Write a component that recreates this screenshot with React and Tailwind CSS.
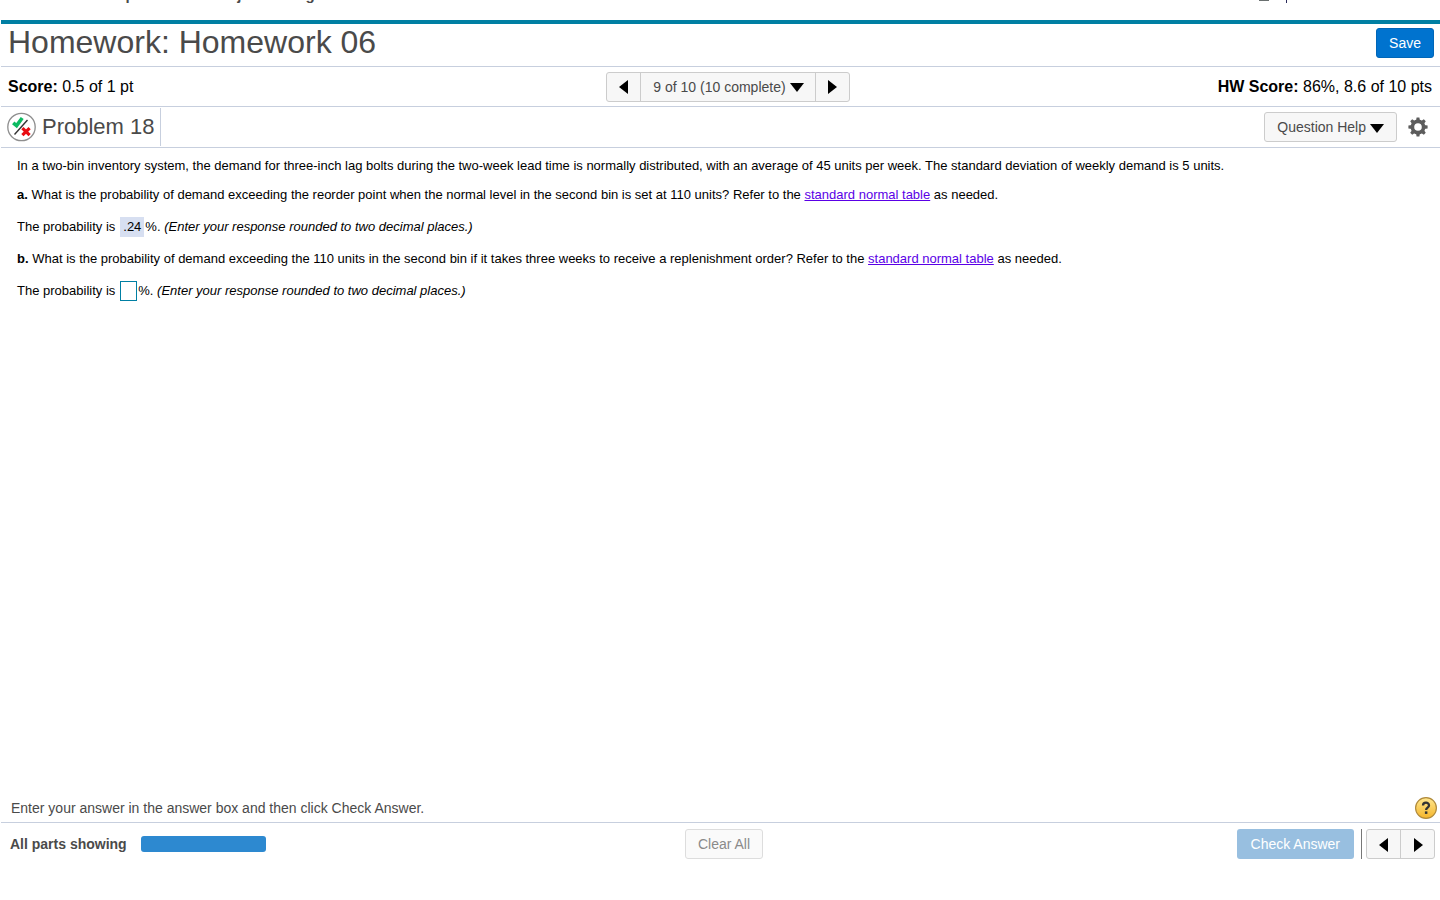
import React, { useState } from 'react';

const Arrow = ({ dir }) => {
  const paths = {
    left: 'M9 0 V14 L0 7 Z',
    right: 'M1 0 V14 L10 7 Z',
    down: 'M0 0 H14 L7 9 Z',
  };
  return (
    <svg
      className={dir === 'down' ? 'w-[14px] h-[9px] mt-[2px] fill-black' : 'w-[10px] h-[14px] mt-px fill-black'}
      viewBox={dir === 'down' ? '0 0 14 9' : '0 0 10 14'}
      aria-hidden="true"
    >
      <path d={paths[dir]} />
    </svg>
  );
};

const PartialIcon = () => (
  <svg className="w-[30px] h-[30px]" viewBox="0 0 30 30" fill="none" aria-hidden="true">
    <circle cx="15.5" cy="15" r="13.7" fill="#fff" stroke="#8e8e8e" strokeWidth="1.3" />
    <path d="M7.2 10.8 L10.6 13.6 L16.2 6" stroke="#0dbb62" strokeWidth="3.6" />
    <path d="M8.5 22.5 L21.5 8" stroke="#333" strokeWidth="1.4" />
    <path d="M16.4 16.2 L23.6 23.2 M23.6 16.2 L16.4 23.2" stroke="#e80c12" strokeWidth="3.2" />
  </svg>
);

const teeth = [0, 45, 90, 135, 180, 225, 270, 315];

const GearIcon = () => (
  <svg className="w-5 h-5" viewBox="0 0 20 20" aria-hidden="true">
    <circle cx="10" cy="10" r="5.6" fill="none" stroke="#5c5c5c" strokeWidth="3.6" />
    {teeth.map((a) => (
      <path key={a} d="M8.6 0.4 H11.4 L12 4 H8 Z" fill="#5c5c5c" transform={`rotate(${a} 10 10)`} />
    ))}
  </svg>
);

const HelpIcon = () => (
  <svg className="w-6 h-6" viewBox="0 0 24 24" aria-hidden="true">
    <defs>
      <linearGradient id="gold" x1="0" y1="0" x2="0" y2="1">
        <stop offset="0" stopColor="#ffe78f" />
        <stop offset="1" stopColor="#f5b52b" />
      </linearGradient>
    </defs>
    <circle cx="12" cy="12" r="10.4" fill="url(#gold)" stroke="#b08a3a" strokeWidth="1.2" />
    <path d="M9 9.6 C9 5.8 15 5.8 15 9.4 C15 11.6 12.1 11.6 12.1 14" fill="none" stroke="#333" strokeWidth="2.3" />
    <rect x="10.9" y="15.4" width="2.5" height="2.5" fill="#333" />
  </svg>
);

const App = () => {
  const [answer, setAnswer] = useState('');

  return (
    <div className="min-h-screen flex flex-col bg-white pl-px pb-[41px] font-['Liberation_Sans',Arial,sans-serif] text-[#4a4a4a]">
      {/* Course bar, scrolled almost out of view */}
      <div className="h-5 overflow-hidden flex items-start justify-between text-[15px] leading-[18px] font-bold">
        <div className="-mt-[14px] pl-8">Homework Operations & Project Management</div>
        <div className="-mt-[14px] pr-12 flex items-start text-sm leading-4 font-normal">
          <span>Student Name</span>
          {/* user icon */}
          <svg className="w-3 h-[15px] mx-2 fill-[#6a7070]" viewBox="0 0 12 15" aria-hidden="true">
            <circle cx="6" cy="4" r="3" />
            <path d="M1 15 V11 Q1 8 6 8 Q11 8 11 11 V15 Z" />
          </svg>
          <div className="h-[17px] ml-2 mr-5 border-l border-[#2a2a5a]" />
          <span>11/12/18 2:12</span>
        </div>
      </div>

      <header className="h-[46px] border-t-4 border-[#007fa3] flex items-start justify-between pl-[7px] pr-[6px]">
        <h1 className="text-[32px] leading-9">Homework: Homework 06</h1>
        <button className="mt-1 h-[30px] px-3 rounded-[3px] border border-[#0066b8] bg-[#0073cf] text-white text-sm">
          Save
        </button>
      </header>

      {/* Score row */}
      <div className="h-10 border-t border-[#c7cfde] grid grid-cols-[1fr_auto_1fr] items-center pl-[7px] pr-2 text-base text-black">
        <div className="pt-px"><b>Score:</b> 0.5 of 1 pt</div>
        <div className="ml-4 flex h-[30px] rounded-[3px] border border-[#ccc] bg-[#f7f7f7] text-[#4a4a4a] text-sm">
          <button aria-label="Previous question" className="w-[34px] flex items-center justify-center border-r border-[#ccc]">
            <Arrow dir="left" />
          </button>
          <button className="flex items-center gap-1 pl-3 pr-[11px] border-r border-[#ccc]">
            9 of 10 (10 complete) <Arrow dir="down" />
          </button>
          <button aria-label="Next question" className="w-[33px] flex items-center justify-center">
            <Arrow dir="right" />
          </button>
        </div>
        <div className="pt-px text-right"><b>HW Score:</b> 86%, 8.6 of 10 pts</div>
      </div>

      {/* Problem title */}
      <div className="h-[42px] border-y border-[#c7cfde] flex items-center justify-between pl-[5px] pr-3">
        <div className="h-[38px] flex items-center gap-[6px] pr-[5px] border-r border-[#c7cfde]">
          <PartialIcon />
          <h2 className="text-[22px] leading-7">Problem 18</h2>
        </div>
        <div className="flex items-center gap-[11px]">
          <button className="h-[30px] flex items-center gap-1 px-3 rounded-[3px] border border-[#ccc] bg-[#f7f7f7] text-sm">
            Question Help <Arrow dir="down" />
          </button>
          <button aria-label="Settings"><GearIcon /></button>
        </div>
      </div>

      <main className="flex-1 px-4 pt-2 text-[13px] leading-5 text-black">
        <p className="mb-[9px]">
          In a two-bin inventory system, the demand for three-inch lag bolts during the two-week lead time is normally distributed, with an average of 45 units per week. The standard deviation of weekly demand is 5 units.
        </p>
        <p className="mb-3">
          <b>a.</b> What is the probability of demand exceeding the reorder point when the normal level in the second bin is set at 110 units? Refer to the{' '}
          <a href="#table" className="text-[#5a00e6] underline">standard normal table</a> as needed.
        </p>
        <p className="mb-3 flex items-center">
          <span className="mr-[5px]">The probability is</span>
          <span className="px-[3px] bg-[#d7dff1]">.24</span>
          <span className="ml-px">%. <i>(Enter your response rounded to two decimal places.)</i></span>
        </p>
        <p className="mb-3">
          <b>b.</b> What is the probability of demand exceeding the 110 units in the second bin if it takes three weeks to receive a replenishment order? Refer to the{' '}
          <a href="#table" className="text-[#5a00e6] underline">standard normal table</a> as needed.
        </p>
        <p className="flex items-center">
          <label htmlFor="answer" className="mr-[5px]">The probability is</label>
          <input
            id="answer"
            value={answer}
            onChange={(e) => setAnswer(e.target.value)}
            className="w-[17px] h-5 border border-[#007fa3]"
          />
          <span className="ml-px">%. <i>(Enter your response rounded to two decimal places.)</i></span>
        </p>
      </main>

      <footer>
        <div className="h-7 flex items-center justify-between pl-[10px] pr-[2px] text-sm">
          <p>Enter your answer in the answer box and then click Check Answer.</p>
          <button aria-label="Help"><HelpIcon /></button>
        </div>
        <div className="border-t border-[#c7cfde] pt-[6px] pl-[9px] pr-[5px] grid grid-cols-[1fr_auto_1fr] items-center text-sm">
          <div className="flex items-center gap-[14px]">
            <b>All parts showing</b>
            <div className="w-[125px] h-4 rounded-[3px] bg-[#2d89d0]" />
          </div>
          <button className="ml-[3px] h-[30px] px-3 rounded-[3px] border border-[#ddd] bg-[#fafafa] text-[#8a8a8a]">
            Clear All
          </button>
          <div className="flex justify-end">
            <button className="h-[30px] px-[14px] rounded-[3px] bg-[#98bfe0] text-white">Check Answer</button>
            <div className="ml-[7px] mr-1 border-l border-[#777]" />
            <div className="flex h-[30px] rounded-[3px] border border-[#ccc] bg-[#f7f7f7]">
              <button aria-label="Previous part" className="w-[34px] flex items-center justify-center border-r border-[#ccc]">
                <Arrow dir="left" />
              </button>
              <button aria-label="Next part" className="w-[33px] flex items-center justify-center">
                <Arrow dir="right" />
              </button>
            </div>
          </div>
        </div>
      </footer>
    </div>
  );
};

export default App;
